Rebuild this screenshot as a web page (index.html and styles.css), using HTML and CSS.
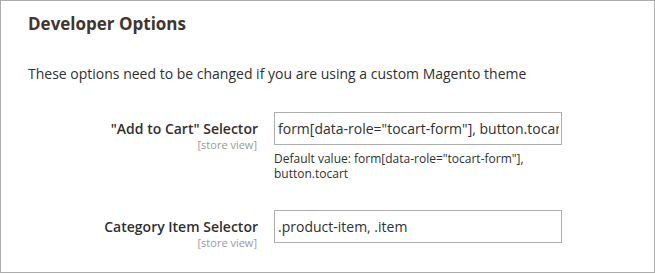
FILE: index.html
```html
<!DOCTYPE html>
<html>
<head>
<meta charset="utf-8">
<link rel="stylesheet" href="styles.css">
</head>
<body>
<div class="panel">
  <h2 class="title">Developer Options</h2>
  <p class="desc">These options need to be changed if you are using a custom Magento theme</p>
  <div class="row row-first">
    <div class="label">
      <div class="label-text">"Add to Cart" Selector</div>
      <div class="scope">[store view]</div>
    </div>
    <div class="control">
      <input class="field" type="text" value="form[data-role=&quot;tocart-form&quot;], button.tocart">
      <div class="note">Default value: form[data-role="tocart-form"], button.tocart</div>
    </div>
  </div>
  <div class="row row-second">
    <div class="label">
      <div class="label-text">Category Item Selector</div>
      <div class="scope">[store view]</div>
    </div>
    <div class="control">
      <input class="field" type="text" value=".product-item, .item">
    </div>
  </div>
</div>
</body>
</html>
```
FILE: styles.css
```css
html, body {
  margin: 0;
  padding: 0;
  background: #ffffff;
}
body {
  font-family: "Open Sans", "DejaVu Sans", sans-serif;
  color: #303030;
}
.panel {
  box-sizing: border-box;
  width: 655px;
  height: 273px;
  border: 1px solid #adadad;
  padding: 11px 0 0 27px;
}
.title {
  margin: 0;
  font-size: 17px;
  line-height: 23px;
  font-weight: 700;
  color: #41362f;
}
.desc {
  margin: 29px 0 0 0;
  font-size: 14px;
  line-height: 19px;
}
.row {
  display: grid;
  grid-template-columns: 230px 288px;
  column-gap: 16px;
  align-items: start;
}
.row-first {
  margin-top: 29px;
}
.row-second {
  margin-top: 29px;
}
.label {
  text-align: right;
  padding-top: 7px;
}
.label-text {
  font-size: 14px;
  line-height: 19px;
  font-weight: 600;
}
.scope {
  font-size: 11px;
  line-height: 13px;
  color: #999999;
  padding-right: 1px;
}
.field {
  box-sizing: border-box;
  display: block;
  width: 288px;
  height: 33px;
  margin: 0;
  border: 1px solid #adadad;
  border-radius: 0;
  padding: 0 2px 0 3px;
  font-family: "Open Sans", "DejaVu Sans", sans-serif;
  font-size: 14px;
  line-height: 19px;
  color: #303030;
  background: #ffffff;
  outline: none;
}
.note {
  margin-top: 6px;
  font-size: 12px;
  line-height: 15px;
  color: #303030;
}
```
